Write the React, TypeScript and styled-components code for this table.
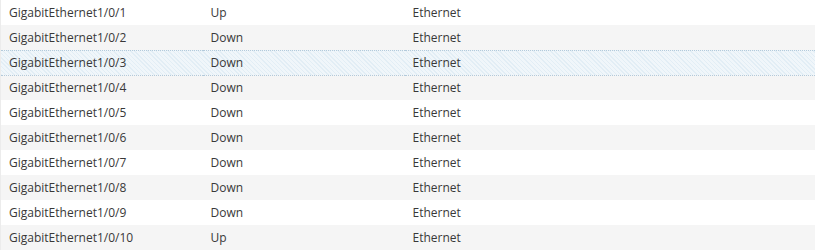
import styled, { createGlobalStyle, css } from "styled-components"

const GlobalStyle = createGlobalStyle`
  html, body {
    margin: 0;
    padding: 0;
    background: #ffffff;
  }
  body {
    font-family: "Open Sans", "Noto Sans", sans-serif;
  }
`

const Table = styled.table`
  width: 815px;
  border-collapse: collapse;
  table-layout: fixed;
  font-size: 12px;
  color: #383838;
`

const Row = styled.tr<{ $striped: boolean; $hover?: boolean }>`
  height: 25px;
  background: ${(p) => (p.$striped ? "#f5f5f5" : "#ffffff")};

  ${(p) =>
    p.$hover &&
    css`
      background-color: #f0f6fa;
      background-image: repeating-linear-gradient(
        45deg,
        rgba(200, 222, 236, 0.35) 0px,
        rgba(200, 222, 236, 0.35) 1px,
        transparent 1px,
        transparent 3px
      );
      & > td {
        border-top: 1px dotted #b3cadb;
        border-bottom: 1px dotted #b3cadb;
      }
    `}
`

const Cell = styled.td<{ $first?: boolean }>`
  padding: 0 8px;
  height: 25px;
  box-sizing: border-box;
  white-space: nowrap;
  vertical-align: middle;
  border-left: ${(p) => (p.$first ? "1px solid #ececec" : "none")};
`

const Col = styled.col<{ $w?: number }>`
  width: ${(p) => (p.$w ? `${p.$w}px` : "auto")};
`

const ports = [
  { name: "GigabitEthernet1/0/1", status: "Up" },
  { name: "GigabitEthernet1/0/2", status: "Down" },
  { name: "GigabitEthernet1/0/3", status: "Down" },
  { name: "GigabitEthernet1/0/4", status: "Down" },
  { name: "GigabitEthernet1/0/5", status: "Down" },
  { name: "GigabitEthernet1/0/6", status: "Down" },
  { name: "GigabitEthernet1/0/7", status: "Down" },
  { name: "GigabitEthernet1/0/8", status: "Down" },
  { name: "GigabitEthernet1/0/9", status: "Down" },
  { name: "GigabitEthernet1/0/10", status: "Up" },
]

export default function App() {
  return (
    <>
      <GlobalStyle />
      <Table>
        <colgroup>
          <Col $w={202} />
          <Col $w={202} />
          <Col />
        </colgroup>
        <tbody>
          {ports.map((p, i) => (
            <Row key={p.name} $striped={i % 2 === 1} $hover={i === 2}>
              <Cell $first>{p.name}</Cell>
              <Cell>{p.status}</Cell>
              <Cell>Ethernet</Cell>
            </Row>
          ))}
        </tbody>
      </Table>
    </>
  )
}
